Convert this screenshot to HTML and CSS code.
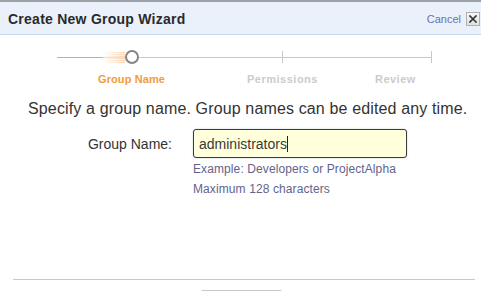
FILE: index.html
```html
<!DOCTYPE html>
<html lang="en">
<head>
    <meta charset="UTF-8">
    <meta name="viewport" content="width=device-width, initial-scale=1.0">
    <title>Create New Group Wizard</title>
    <link rel="stylesheet" href="styles.css">
</head>
<body>
    <div class="wizard">
        <header class="wizard-header">
            <h1 class="titulo">Create New Group Wizard</h1>
            <div class="header-actions">
                <a href="#" class="cancel-link">Cancel</a>
                <button class="close-btn" aria-label="Close">
                    <svg width="8" height="8" viewBox="0 0 8 8">
                        <path d="M1 1 L7 7 M7 1 L1 7" stroke="#333" stroke-width="1.6" stroke-linecap="square"/>
                    </svg>
                </button>
            </div>
        </header>

        <!-- Passos do wizard -->
        <div class="stepper">
            <div class="track">
                <div class="track-done"></div>
                <div class="step-dot"></div>
                <div class="track-todo first"></div>
                <div class="tick"></div>
                <div class="track-todo second"></div>
                <div class="tick"></div>
            </div>
            <div class="step-labels">
                <span class="step-label active">Group Name</span>
                <span class="step-label permissions">Permissions</span>
                <span class="step-label review">Review</span>
            </div>
        </div>

        <div class="main-content">
            <p class="intro">Specify a group name. Group names can be edited any time.</p>

            <div class="form-row">
                <label class="form-label" for="group-name">Group Name:</label>
                <div class="input-box">
                    <span class="input-text">administrators</span><span class="caret"></span>
                </div>
            </div>

            <div class="hint">
                <div>Example: Developers or ProjectAlpha</div>
                <div>Maximum 128 characters</div>
            </div>
        </div>

        <footer class="wizard-footer">
            <div class="footer-line"></div>
            <div class="footer-btn"></div>
        </footer>
    </div>
</body>
</html>
```

FILE: styles.css
```css
* {
    margin: 0;
    padding: 0;
    box-sizing: border-box;
    font-family: 'Liberation Sans', Arial, sans-serif;
}

body {
    background-color: #fff;
    width: 481px;
    height: 291px;
    overflow: hidden;
}

.wizard {
    height: 291px;
    overflow: hidden;
}

.wizard-header {
    border-top: 2px solid #9ca1a8;
    border-bottom: 1px solid #c6d9f1;
    background-color: #eaf1fb;
    height: 35px;
    padding: 8px 1px 0 8px;
    display: flex;
    justify-content: space-between;
    align-items: flex-start;
}

.titulo {
    font-size: 14px;
    line-height: 18px;
    font-weight: bold;
    letter-spacing: 0.25px;
    color: #2a2a2a;
}

.header-actions {
    display: flex;
    align-items: center;
    gap: 5px;
    margin-top: 2px;
}

.cancel-link {
    font-size: 11px;
    color: #6f6fb0;
    text-decoration: none;
}

.close-btn {
    width: 14px;
    height: 14px;
    border: 1px solid #b0b0b0;
    background: linear-gradient(#f7f7f7, #e0e0e0);
    display: flex;
    align-items: center;
    justify-content: center;
    cursor: pointer;
}

/* Stepper */
.stepper {
    margin-top: 15px;
}

.track {
    display: flex;
    align-items: center;
    height: 14px;
    margin-left: 57px;
}

.track-done {
    width: 68px;
    height: 1px;
    background-color: #f0a35a;
    position: relative;
}

.track-done::after {
    content: '';
    position: absolute;
    right: 0;
    top: -5px;
    width: 22px;
    height: 11px;
    background:
        repeating-linear-gradient(to bottom, transparent 0, transparent 1px, rgba(255,255,255,0.6) 1px, rgba(255,255,255,0.6) 2px),
        linear-gradient(to right, rgba(247,170,100,0), rgba(247,170,100,0.5));
}

.step-dot {
    width: 14px;
    height: 14px;
    border: 2px solid #858585;
    border-radius: 50%;
    background-color: #fff;
}

.track-todo {
    height: 1px;
    background-color: #c8c8c8;
}

.track-todo.first {
    width: 143px;
}

.track-todo.second {
    width: 148px;
}

.tick {
    width: 1px;
    height: 12px;
    background-color: #c8c8c8;
}

.step-labels {
    display: flex;
    margin-top: 8px;
    padding-left: 98px;
}

.step-label {
    font-size: 11px;
    line-height: 14px;
    font-weight: bold;
    letter-spacing: 0.5px;
    color: #cbcbcb;
}

.step-label.active {
    letter-spacing: 0.1px;
    color: #f39a3d;
}

.step-label.permissions {
    margin-left: 82px;
}

.step-label.review {
    margin-left: 57px;
}

/* Formulário */
.main-content {
    padding-top: 14px;
}

.intro {
    font-size: 16px;
    line-height: 18px;
    letter-spacing: 0.14px;
    color: #333;
    padding-left: 28px;
}

.form-row {
    display: flex;
    align-items: center;
    margin-top: 11px;
}

.form-label {
    width: 172px;
    text-align: right;
    font-size: 14px;
    color: #333;
}

.input-box {
    margin-left: 21px;
    width: 214px;
    height: 29px;
    border: 1px solid #3a3a3a;
    border-radius: 3px;
    background-color: #ffffdc;
    box-shadow: 0 0 2px rgba(120,150,200,0.5);
    padding-left: 5px;
    display: flex;
    align-items: center;
}

.input-text {
    font-size: 14px;
    color: #3a3a3a;
}

.caret {
    width: 1px;
    height: 16px;
    background-color: #222;
}

.hint {
    margin-left: 193px;
    margin-top: 1px;
    font-size: 12px;
    line-height: 20px;
    letter-spacing: 0.1px;
    color: #63638a;
}

/* Rodapé */
.wizard-footer {
    margin-top: 80px;
}

.footer-line {
    margin-left: 13px;
    width: 462px;
    height: 1px;
    background-color: #c8c8c8;
}

.footer-btn {
    margin: 10px 0 0 200px;
    width: 83px;
    height: 24px;
    border: 1px solid #c6c6c6;
    border-radius: 3px;
    background: linear-gradient(#f4f4f4, #e2e2e2);
}
```
